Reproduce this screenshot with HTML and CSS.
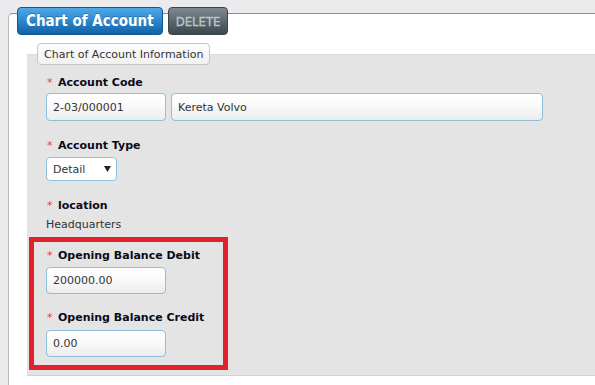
FILE: index.html
```html
<!DOCTYPE html>
<html>
<head>
<meta charset="utf-8">
<link rel="stylesheet" href="styles.css">
</head>
<body>
<div class="panel">
  <div class="tabs">
    <span class="tab tab-primary">Chart of Account</span>
    <span class="tab tab-delete">DELETE</span>
  </div>
  <div class="fs">
    <div class="legend">Chart of Account Information</div>

    <div class="group g-first">
      <div class="label"><span class="req">*</span>Account Code</div>
      <div class="row">
        <input class="input w-code" type="text" value="2-03/000001" readonly>
        <input class="input w-name" type="text" value="Kereta Volvo" readonly>
      </div>
    </div>

    <div class="group g-next">
      <div class="label"><span class="req">*</span>Account Type</div>
      <div class="select">
        <span>Detail</span>
        <svg class="arrow" width="7" height="6" viewBox="0 0 7 6"><path d="M0 0H7L3.5 6Z" fill="#222"/></svg>
      </div>
    </div>

    <div class="group g-next">
      <div class="label"><span class="req">*</span>location</div>
      <div class="value">Headquarters</div>
    </div>

    <div class="highlight">
      <div class="label"><span class="req">*</span>Opening Balance Debit</div>
      <input class="input w-code h27 mt5" type="text" value="200000.00" readonly>
      <div class="label mt17"><span class="req">*</span>Opening Balance Credit</div>
      <input class="input w-code h27 mt6" type="text" value="0.00" readonly>
    </div>
  </div>
</div>
</body>
</html>
```
FILE: styles.css
```css
html, body {
  margin: 0;
  padding: 0;
}
body {
  background: #ebebed;
  font-family: "DejaVu Sans", Verdana, sans-serif;
  font-size: 11px;
  line-height: 13px;
  color: #111;
  height: 385px;
  overflow: hidden;
}
.panel {
  margin: 13px 0 0 8px;
  border-top: 1px solid #8c8c8c;
  border-left: 1px solid #b8b8b8;
  border-top-left-radius: 5px;
  background: #fff;
  padding: 0 0 0 8px;
  min-height: 371px;
}
.tabs {
  display: flex;
  gap: 5px;
  margin-top: -7px;
}
.tab {
  display: flex;
  align-items: center;
  height: 26px;
  border-radius: 4px;
  font-family: "DejaVu Sans Condensed", "DejaVu Sans", sans-serif;
  font-weight: bold;
}
.tab-primary {
  padding: 0 8px;
  font-size: 15px;
  color: #fff;
  background: linear-gradient(#4eaaea, #2c86cc 50%, #1262a6);
  border: 1px solid #0f5894;
  text-shadow: 0 -1px 0 rgba(0,0,0,0.25);
}
.tab-delete {
  padding: 0 7px;
  font-size: 13px;
  font-weight: normal;
  color: #bcc6ce;
  background: linear-gradient(#7e8a90, #5c686e 50%, #3d484e);
  border: 1px solid #3a4449;
  -webkit-text-stroke: 0.3px #bcc6ce;
}
.fs {
  display: flex;
  flex-direction: column;
  align-items: flex-start;
  margin: 19px 0 0 10px;
  background: #e4e4e4;
  border-top: 1px solid #dadada;
  border-bottom: 1px solid #d2d2d2;
  padding-bottom: 5px;
}
.legend {
  margin: -12px 0 0 10px;
  padding: 4px 6px 3px;
  border: 1px solid #c6c6c6;
  border-radius: 4px;
  background: linear-gradient(#fdfdfd, #f1f1f1);
  color: #333;
}
.group {
  margin-left: 19px;
}
.g-first { margin-top: 11px; }
.g-next { margin-top: 18px; }
.label {
  font-weight: bold;
  color: #0b0b18;
}
.req {
  display: inline-block;
  width: 12px;
  padding-left: 1px;
  box-sizing: border-box;
  color: #ec3a3a;
  font-weight: normal;
  font-size: 11px;
}
.row {
  display: flex;
  gap: 5px;
  margin-top: 4px;
}
.input {
  box-sizing: border-box;
  height: 28px;
  margin: 0;
  padding: 0 6px;
  border: 1px solid #8fbfda;
  border-radius: 4px;
  background: linear-gradient(#ffffff, #fbfbfb 40%, #ececec);
  font-family: "DejaVu Sans", Verdana, sans-serif;
  font-size: 11px;
  color: #333;
  outline: none;
}
.w-code { width: 120px; }
.w-name { width: 372px; }
.h27 { height: 27px; }
.mt5 { margin-top: 5px; }
.mt6 { margin-top: 6px; }
.mt17 { margin-top: 17px; }
.select {
  box-sizing: border-box;
  display: flex;
  align-items: center;
  justify-content: space-between;
  width: 71px;
  height: 24px;
  margin-top: 5px;
  padding: 0 5px 0 6px;
  border: 1px solid #8fbfda;
  border-radius: 4px;
  background: #fff;
  color: #333;
}
.arrow {
  display: block;
}
.value {
  margin-top: 6px;
  color: #333;
}
.highlight {
  box-sizing: border-box;
  width: 199px;
  margin: 6px 0 0 2px;
  border: 5px solid #e3212a;
  padding: 7px 0 8px 12px;
  display: flex;
  flex-direction: column;
  align-items: flex-start;
}
```
